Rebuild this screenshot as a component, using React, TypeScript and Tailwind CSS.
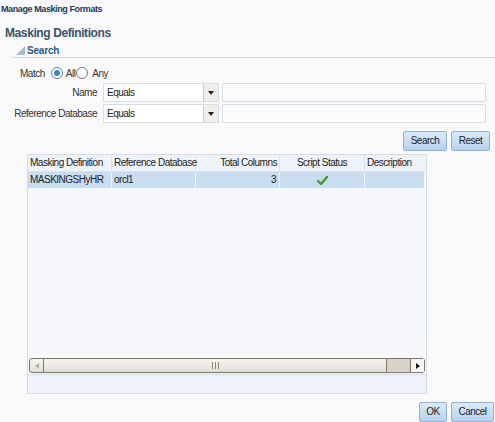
import { useState } from "react";

const cols = [
  { label: "Masking Definition", w: "w-[84px]", align: "text-left" },
  { label: "Reference Database", w: "w-[84px]", align: "text-left" },
  { label: "Total Columns", w: "w-[84px]", align: "text-right" },
  { label: "Script Status", w: "w-[85px]", align: "text-center" },
  { label: "Description", w: "flex-1", align: "text-left" },
];

function Radio({ checked, onClick }: { checked: boolean; onClick: () => void }) {
  return (
    <button
      type="button"
      onClick={onClick}
      className="w-[12px] h-[12px] rounded-full border border-[#6f7c88] bg-white flex items-center justify-center"
    >
      {checked && <span className="w-[6px] h-[6px] rounded-full bg-[#3b83d1]" />}
    </button>
  );
}

function Select({ value }: { value: string }) {
  return (
    <div className="w-[116px] h-[19px] flex border border-[#d6dde4] bg-white">
      <span className="flex-1 pl-[3px] leading-[17px] text-[#222]">{value}</span>
      <span className="w-[15px] border-l border-[#c6ccd2] bg-[#f0eeea] flex items-center justify-center">
        <svg width="6" height="4" viewBox="0 0 6 4">
          <path d="M0 0h6L3 4z" fill="#222" />
        </svg>
      </span>
    </div>
  );
}

function Btn({ children, w }: { children: string; w: string }) {
  return (
    <button
      type="button"
      className={`${w} h-[20px] rounded-[2px] border border-[#8fb3d6] bg-gradient-to-b from-[#dbeaf8] to-[#b7d2ed] text-[#222] leading-none`}
    >
      {children}
    </button>
  );
}

export default function App() {
  const [match, setMatch] = useState("all");

  return (
    <div
      className="w-[495px] h-[422px] bg-[#f9f9f9] text-[10px] tracking-[-0.5px] text-[#333] overflow-hidden relative"
      style={{ fontFamily: '"Liberation Sans", Arial, sans-serif' }}
    >
      <div className="pt-[3px] pl-[1px] text-[9px] font-bold text-[#1c3a57] leading-[12px] tracking-[-0.4px]">Manage Masking Formats</div>

      <div className="pl-[5px] mt-[10px] text-[12px] font-bold text-[#35536d] leading-[16px] tracking-[-0.4px]">Masking Definitions</div>

      <div className="ml-[11px] mt-[2px] border-b border-[#d2dae2] h-[15px] flex items-center gap-[2px] pl-[5px]">
        <svg width="9" height="9" viewBox="0 0 9 9">
          <path d="M9 0v9H0z" fill="#a9bdd0" />
        </svg>
        <span className="font-bold text-[#2d5b82] tracking-[-0.2px]">Search</span>
      </div>

      <div className="flex items-center mt-[8px] pl-[20px] h-[14px]">
        <span className="mr-[6px]">Match</span>
        <Radio checked={match === "all"} onClick={() => setMatch("all")} />
        <span className="ml-[3px] mr-[1px]">All</span>
        <Radio checked={match === "any"} onClick={() => setMatch("any")} />
        <span className="ml-[4px]">Any</span>
      </div>

      <div className="flex flex-col gap-[2px] mt-[3px]">
        {["Name", "Reference Database"].map((l) => (
          <div key={l} className="flex items-center h-[19px]">
            <span className="w-[98px] text-right pr-[1px] whitespace-nowrap">{l}</span>
            <div className="ml-[5px]">
              <Select value="Equals" />
            </div>
            <div className="ml-[3px] w-[264px] h-[19px] border border-[#d6dde4] bg-[#fbfcfe] rounded-[2px]" />
          </div>
        ))}
      </div>

      <div className="flex justify-end gap-[4px] pr-[5px] mt-[8px]">
        <Btn w="w-[44px]">Search</Btn>
        <Btn w="w-[39px]">Reset</Btn>
      </div>

      <div className="ml-[27px] mt-[3px] w-[400px] border border-[#d4dde7] bg-[#f5f7fb]">
        <div className="flex h-[17px] bg-[#eef2f9] border-b border-[#dde3ea]">
          {cols.map((c, i) => (
            <div
              key={c.label}
              className={`${c.w} ${c.align} ${i < 4 ? "border-r border-[#dde3ea]" : ""} px-[2px] leading-[16px] text-[#222] whitespace-nowrap`}
            >
              {c.label}
            </div>
          ))}
        </div>
        <div className="flex h-[16px] mr-[2px] bg-[#c9dcf0]">
          <div className="w-[84px] border-r border-[#eef2f9] px-[2px] leading-[16px] text-[#222]">MASKINGSHyHR</div>
          <div className="w-[84px] border-r border-[#eef2f9] px-[2px] leading-[16px] text-[#222]">orcl1</div>
          <div className="w-[84px] border-r border-[#eef2f9] px-[3px] leading-[16px] text-right text-[#222]">3</div>
          <div className="w-[85px] border-r border-[#eef2f9] flex items-center justify-center">
            <svg width="11" height="9" viewBox="0 0 11 9">
              <path d="M1 5l3 3L10 1" stroke="#3f9b2d" strokeWidth="2.4" fill="none" strokeLinecap="round" strokeLinejoin="round" />
            </svg>
          </div>
          <div className="flex-1" />
        </div>
        <div className="h-[170px]" />
        <div className="mx-[1px] h-[15px] flex border border-[#7d7668] rounded-[3px] bg-gradient-to-b from-[#f7f5f1] to-[#e2ddd5]">
          <div className="w-[14px] border-r border-[#7d7668] flex items-center justify-center">
            <svg width="4" height="6" viewBox="0 0 4 6">
              <path d="M4 0v6L0 3z" fill="#b5b0a8" />
            </svg>
          </div>
          <div className="flex-1 flex items-center justify-center">
            <div className="flex gap-[2px] h-[7px]">
              <span className="w-[1px] bg-[#8b8478]" />
              <span className="w-[1px] bg-[#8b8478]" />
              <span className="w-[1px] bg-[#8b8478]" />
            </div>
          </div>
          <div className="w-[24px] border-l border-[#7d7668] bg-[#d8d2c8]" />
          <div className="w-[14px] border-l border-[#7d7668] bg-[#f7f5f1] flex items-center justify-center">
            <svg width="4" height="6" viewBox="0 0 4 6">
              <path d="M0 0v6L4 3z" fill="#111" />
            </svg>
          </div>
        </div>
        <div className="mt-[1px] h-[19px] border-t border-[#d4dde7] bg-[#eff2fa]" />
      </div>

      <div className="flex justify-end gap-[4px] pr-[1px] mt-[8px]">
        <Btn w="w-[28px]">OK</Btn>
        <Btn w="w-[43px]">Cancel</Btn>
      </div>
    </div>
  );
}
